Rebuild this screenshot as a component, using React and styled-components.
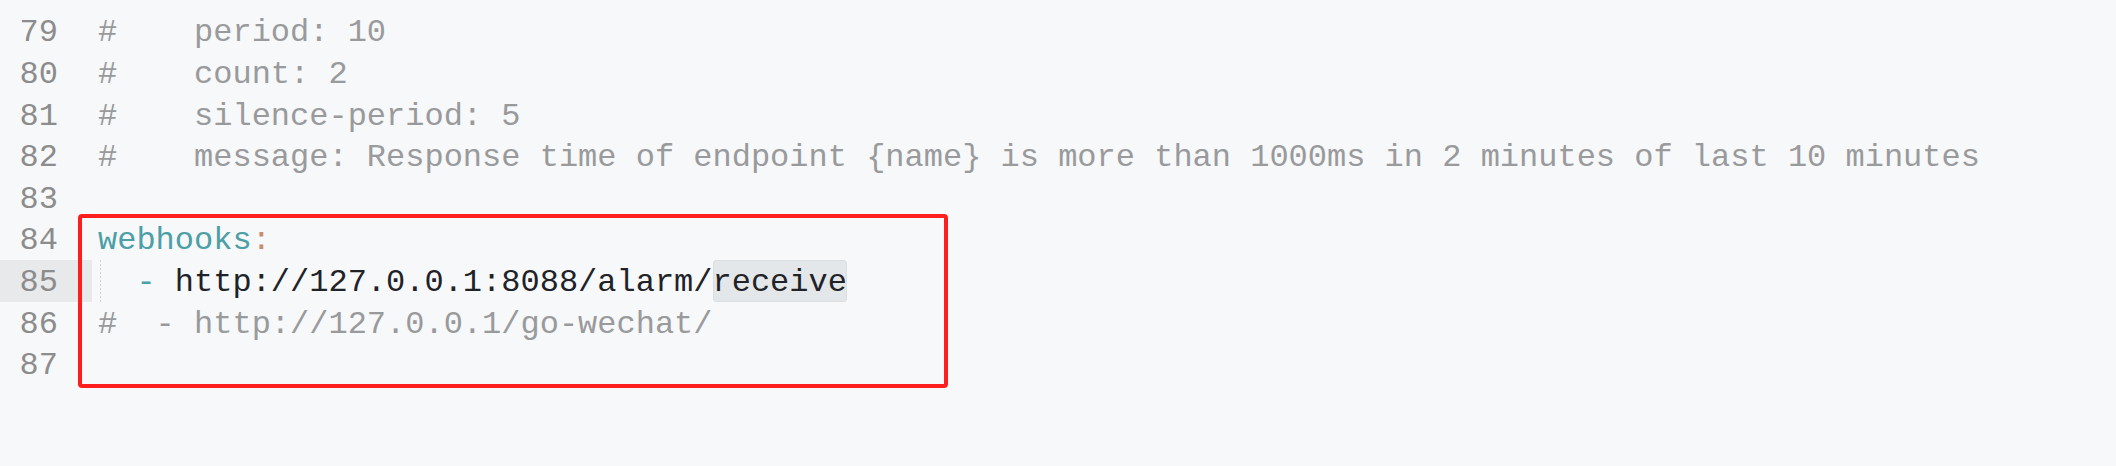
import React from "react";
import styled, { createGlobalStyle } from "styled-components";

const GlobalStyle = createGlobalStyle`
  html, body {
    margin: 0;
    padding: 0;
    background: #f7f8f9;
  }
`;

const Editor = styled.div`
  width: 2116px;
  height: 466px;
  overflow: hidden;
  background: #f7f8f9;
  font-family: "Liberation Mono", "DejaVu Sans Mono", monospace;
  font-size: 32px;
`;

const Lines = styled.div`
  display: flex;
  flex-direction: column;
  margin-top: -31.2px;
`;

const Group = styled.div`
  position: relative;
  display: flex;
  flex-direction: column;
`;

const Marker = styled.div`
  position: absolute;
  top: -4px;
  bottom: -3px;
  left: 78px;
  width: 870px;
  box-sizing: border-box;
  border: 4.5px solid #ff1d1d;
  border-radius: 4px;
  pointer-events: none;
`;

const Line = styled.div`
  display: grid;
  grid-template-columns: 92px 1fr;
  height: 41.6px;
`;

const Gutter = styled.div`
  box-sizing: border-box;
  height: 41.6px;
  padding: 5px 34px 0 0;
  line-height: 36.6px;
  text-align: right;
  color: #8c8c8c;
  background: ${(p) => (p.$active ? "#e7e9eb" : "transparent")};
`;

const Code = styled.div`
  box-sizing: border-box;
  height: 41.6px;
  padding: 5px 0 0 6px;
  line-height: 36.6px;
  white-space: pre;
  color: #1f2328;
  background: ${(p) =>
    p.$guide
      ? "repeating-linear-gradient(to bottom, #cfd2d5 0 2px, transparent 2px 4px) 8px 0 / 1px 100% no-repeat"
      : "none"};
`;

const Comment = styled.span`
  color: #999a9c;
`;

const Key = styled.span`
  color: #4c9fa6;
`;

const Punct = styled.span`
  color: #c98a6d;
`;

const Dash = styled.span`
  color: #4c9fa6;
`;

const Word = styled.span`
  display: inline-block;
  height: 41.6px;
  margin-top: -5px;
  padding-top: 5px;
  box-sizing: border-box;
  background: #e4e7ea;
  border-radius: 4px;
  box-shadow: inset 0 0 0 1px #dcdfe2;
`;

const comments = [
  [78, "#    threshold: 1000"],
  [79, "#    period: 10"],
  [80, "#    count: 2"],
  [81, "#    silence-period: 5"],
  [
    82,
    "#    message: Response time of endpoint {name} is more than 1000ms in 2 minutes of last 10 minutes",
  ],
  [83, ""],
];

export default function App() {
  return (
    <>
      <GlobalStyle />
      <Editor>
        <Lines>
          {comments.map(([n, text]) => (
            <Line key={n}>
              <Gutter>{n}</Gutter>
              <Code>
                <Comment>{text}</Comment>
              </Code>
            </Line>
          ))}
          <Group>
            <Line>
              <Gutter>84</Gutter>
              <Code>
                <Key>webhooks</Key>
                <Punct>:</Punct>
              </Code>
            </Line>
            <Line>
              <Gutter $active>85</Gutter>
              <Code $guide>
                {"  "}
                <Dash>-</Dash>
                {" http://127.0.0.1:8088/alarm/"}
                <Word>receive</Word>
              </Code>
            </Line>
            <Line>
              <Gutter>86</Gutter>
              <Code>
                <Comment>{"#  - http://127.0.0.1/go-wechat/"}</Comment>
              </Code>
            </Line>
            <Line>
              <Gutter>87</Gutter>
              <Code />
            </Line>
            <Marker />
          </Group>
        </Lines>
      </Editor>
    </>
  );
}
